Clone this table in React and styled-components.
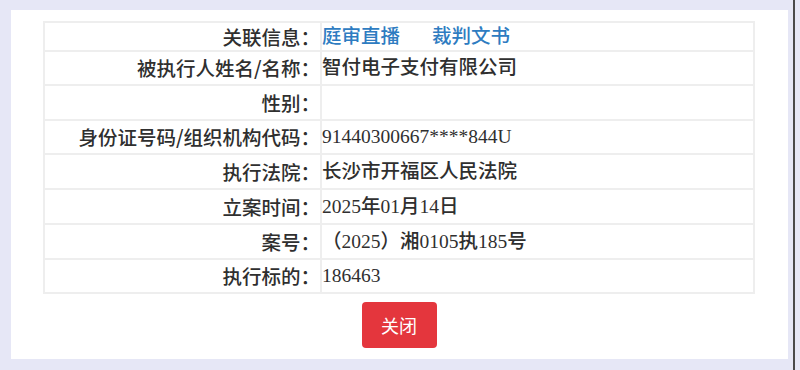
import React from "react";
import styled, { createGlobalStyle } from "styled-components";

const Global = createGlobalStyle`
  html, body { margin: 0; padding: 0; background: #e6e7f6; }
  body { font-family: "Liberation Serif", "Noto Sans CJK SC", serif; color: #333; }
`;

const Frame = styled.div`
  width: 795px;
  height: 370px;
  box-sizing: border-box;
  padding: 10px 0 0 11px;
  border-right: 2px solid #4a4a4a;
`;

const Panel = styled.div`
  width: 777px;
  height: 349px;
  box-sizing: border-box;
  background: #fff;
  padding: 11px 33px 0 32px;
  display: flex;
  flex-direction: column;
  align-items: center;
`;

const Table = styled.table`
  width: 712px;
  border-collapse: collapse;
  table-layout: fixed;
  font-size: 19.5px;
  line-height: 24px;
  font-weight: 500;
`;

const Row = styled.tr`
  height: ${(p) => p.$h}px;
`;

const Label = styled.td`
  width: 277px;
  box-sizing: border-box;
  border: 2px solid #eeeeee;
  text-align: right;
  padding: 0;
  color: #2f2f2f;
  white-space: nowrap;
  font-family: "Noto Sans CJK SC", "Liberation Sans", sans-serif;
`;

const Value = styled.td`
  border: 2px solid #eeeeee;
  padding: 0;
  color: #2f2f2f;
  white-space: nowrap;
`;

const Link = styled.a`
  color: #2e7cc1;
  text-decoration: none;
  cursor: pointer;
  & + & { margin-left: 32px; }
`;

const CloseButton = styled.button`
  margin-top: 8px;
  width: 75px;
  height: 46px;
  border: none;
  border-radius: 4px;
  background: #e4363d;
  color: #fff;
  font-family: "Noto Sans CJK SC", sans-serif;
  font-size: 18px;
  cursor: pointer;
`;

const rows = [
  ["被执行人姓名/名称：", "智付电子支付有限公司", 34],
  ["性别：", "", 35],
  ["身份证号码/组织机构代码：", "91440300667****844U", 34],
  ["执行法院：", "长沙市开福区人民法院", 35],
  ["立案时间：", "2025年01月14日", 35],
  ["案号：", "（2025）湘0105执185号", 35],
  ["执行标的：", "186463", 34],
];

export default function App() {
  return (
    <>
      <Global />
      <Frame>
        <Panel>
          <Table>
            <tbody>
              <Row $h={29}>
                <Label>关联信息：</Label>
                <Value>
                  <Link>庭审直播</Link>
                  <Link>裁判文书</Link>
                </Value>
              </Row>
              {rows.map(([l, v, h]) => (
                <Row key={l} $h={h}>
                  <Label>{l}</Label>
                  <Value>{v}</Value>
                </Row>
              ))}
            </tbody>
          </Table>
          <CloseButton>关闭</CloseButton>
        </Panel>
      </Frame>
    </>
  );
}
